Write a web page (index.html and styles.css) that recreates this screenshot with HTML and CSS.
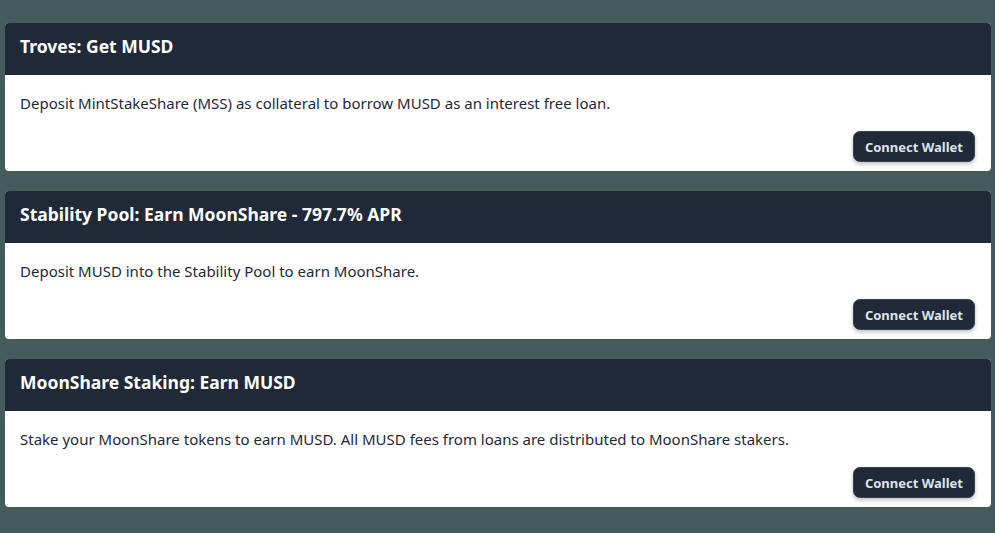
FILE: index.html
```html
<!DOCTYPE html>
<html lang="en">
<head>
    <meta charset="UTF-8">
    <meta name="viewport" content="width=device-width, initial-scale=1.0">
    <title>MoonShare</title>
    <link rel="stylesheet" href="styles.css">
</head>
<body>
    <div class="container">
        <div class="card">
            <h2 class="card-title">Troves: Get MUSD</h2>
            <div class="card-body">
                <p>Deposit MintStakeShare (MSS) as collateral to borrow MUSD as an interest free loan.</p>
                <div class="actions">
                    <button class="btn">Connect Wallet</button>
                </div>
            </div>
        </div>

        <div class="card">
            <h2 class="card-title">Stability Pool: Earn MoonShare - 797.7% APR</h2>
            <div class="card-body">
                <p>Deposit MUSD into the Stability Pool to earn MoonShare.</p>
                <div class="actions">
                    <button class="btn">Connect Wallet</button>
                </div>
            </div>
        </div>

        <div class="card">
            <h2 class="card-title">MoonShare Staking: Earn MUSD</h2>
            <div class="card-body">
                <p>Stake your MoonShare tokens to earn MUSD. All MUSD fees from loans are distributed to MoonShare stakers.</p>
                <div class="actions">
                    <button class="btn">Connect Wallet</button>
                </div>
            </div>
        </div>
    </div>
</body>
</html>
```

FILE: styles.css
```css
body {
    font-family: 'Noto Sans', 'Open Sans', sans-serif;
    margin: 0;
    padding: 0;
    background-color: #455c5c;
    color: #1f2937;
}
.container {
    display: flex;
    flex-direction: column;
    gap: 20px;
    padding: 23px 4px 0 5px;
}
.card {
    background: white;
    border-radius: 4px;
    overflow: hidden;
    height: 148px;
    display: flex;
    flex-direction: column;
}
.card-title {
    margin: 0;
    height: 52px;
    box-sizing: border-box;
    padding: 0 15px 6px;
    display: flex;
    align-items: center;
    background: #1f2937;
    color: white;
    font-size: 17.5px;
    font-weight: bold;
}
.card-body {
    padding: 0 16px 0 15px;
}
.card-body p {
    margin: 18px 0 0;
    font-size: 15px;
    line-height: 20px;
}
.actions {
    display: flex;
    justify-content: flex-end;
    margin-top: 18px;
}
.btn {
    font-family: inherit;
    font-size: 13px;
    font-weight: bold;
    color: #dbe4ec;
    background: #1f2937;
    border: 1px solid #374151;
    border-radius: 7px;
    height: 31px;
    padding: 0 11px;
    box-shadow: 0 2px 4px rgba(0, 0, 0, 0.25);
}
```
